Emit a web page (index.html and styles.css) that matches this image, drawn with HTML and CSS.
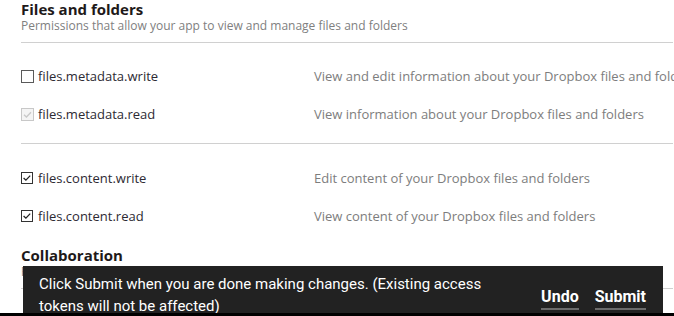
FILE: index.html
```html
<!DOCTYPE html>
<html lang="en">
  <head>
    <meta charset="UTF-8" />
    <title>Permissions</title>
    <link rel="stylesheet" href="styles.css">
  </head>

  <body>
    <div class="page">
      <section class="scope">
        <h2>Files and folders</h2>
        <p class="scope-sub">Permissions that allow your app to view and manage files and folders</p>

        <div class="group">
          <div class="perm">
            <label class="perm-name"><span class="box"></span>files.metadata.write</label>
            <span class="perm-desc">View and edit information about your Dropbox files and folders</span>
          </div>
          <div class="perm">
            <label class="perm-name"><span class="box disabled">
              <svg viewBox="0 0 13 13" width="13" height="13"><path d="M3 6.8 L5.4 9 L10 4.2" fill="none" stroke="#c8c8c8" stroke-width="1.3"/></svg>
            </span>files.metadata.read</label>
            <span class="perm-desc">View information about your Dropbox files and folders</span>
          </div>
        </div>

        <div class="group second">
          <div class="perm">
            <label class="perm-name"><span class="box checked">
              <svg viewBox="0 0 12 12" width="12" height="12"><path d="M2.6 6 L4.9 8.2 L9.2 3.6" fill="none" stroke="#222" stroke-width="1.3"/></svg>
            </span>files.content.write</label>
            <span class="perm-desc">Edit content of your Dropbox files and folders</span>
          </div>
          <div class="perm">
            <label class="perm-name"><span class="box checked">
              <svg viewBox="0 0 12 12" width="12" height="12"><path d="M2.6 6 L4.9 8.2 L9.2 3.6" fill="none" stroke="#222" stroke-width="1.3"/></svg>
            </span>files.content.read</label>
            <span class="perm-desc">View content of your Dropbox files and folders</span>
          </div>
        </div>
      </section>

      <section class="scope collab">
        <h2>Collaboration</h2>
        <p class="scope-sub">Permissions that allow your app to view and manage sharing and collaboration</p>
        <div class="group"></div>
      </section>
    </div>

    <div class="snackbar">
      <div class="snack-text">Click Submit when you are done making changes. (Existing access tokens will not be affected)</div>
      <div class="snack-actions">
        <button class="snack-btn">Undo</button>
        <button class="snack-btn">Submit</button>
      </div>
    </div>
    <div class="bottom-strip"></div>
  </body>
</html>
```

FILE: styles.css
```css
body {
  margin: 0;
  font-family: 'Open Sans', sans-serif;
  background-color: #fff;
  color: #1e1919;
  width: 674px;
  height: 316px;
  overflow: hidden;
}

.page {
  padding-left: 21px;
  width: 652px;
}

.scope h2 {
  margin: 0;
  font-size: 15px;
  line-height: 18px;
  font-weight: 700;
  color: #1e1919;
}

.scope-sub {
  margin: 0 0 8px;
  font-size: 12px;
  line-height: 16px;
  color: #808080;
  white-space: nowrap;
}

.group {
  border-top: 1px solid #d0d0d0;
  padding: 14px 0 10px;
}

.group.second {
  padding-top: 15px;
}

.perm {
  display: flex;
  align-items: center;
  height: 38px;
  font-size: 13px;
  white-space: nowrap;
}

.perm-name {
  display: flex;
  align-items: center;
  width: 293px;
  flex-shrink: 0;
  color: #2d2a33;
}

.perm-desc {
  color: #7d7d7d;
}

.box {
  display: inline-flex;
  align-items: center;
  justify-content: center;
  box-sizing: border-box;
  width: 13px;
  height: 13px;
  margin-right: 4px;
  border: 1px solid #5a5a5a;
  background: #fff;
}

.box svg {
  display: block;
  flex-shrink: 0;
}

.box.disabled {
  border-color: #c8c8c8;
  background: #f4f4f4;
}

.box.checked {
  width: 12px;
  height: 12px;
  margin-right: 5px;
  border-color: #333;
}

.collab {
  margin-top: 1px;
}

.snackbar {
  position: fixed;
  left: 23px;
  bottom: 3px;
  width: 640px;
  height: 47px;
  box-sizing: border-box;
  padding: 7px 17px 0 16px;
  background-color: #222;
  color: #fff;
  font-family: Roboto, 'Liberation Sans', sans-serif;
  font-size: 15px;
  line-height: 22px;
  display: flex;
  align-items: flex-start;
  overflow: hidden;
}

.snack-text {
  width: 465px;
}

.snack-actions {
  margin-left: auto;
  margin-top: 14px;
  display: flex;
  gap: 16px;
}

.snack-btn {
  background: none;
  border: none;
  border-bottom: 2px solid #6b6b6b;
  padding: 0 0 1px;
  color: #fff;
  font-family: Roboto, 'Liberation Sans', sans-serif;
  font-size: 16px;
  font-weight: 700;
  line-height: 20px;
  cursor: pointer;
}

.bottom-strip {
  position: fixed;
  left: 0;
  right: 0;
  bottom: 0;
  height: 3px;
  background-color: #000;
}
```
